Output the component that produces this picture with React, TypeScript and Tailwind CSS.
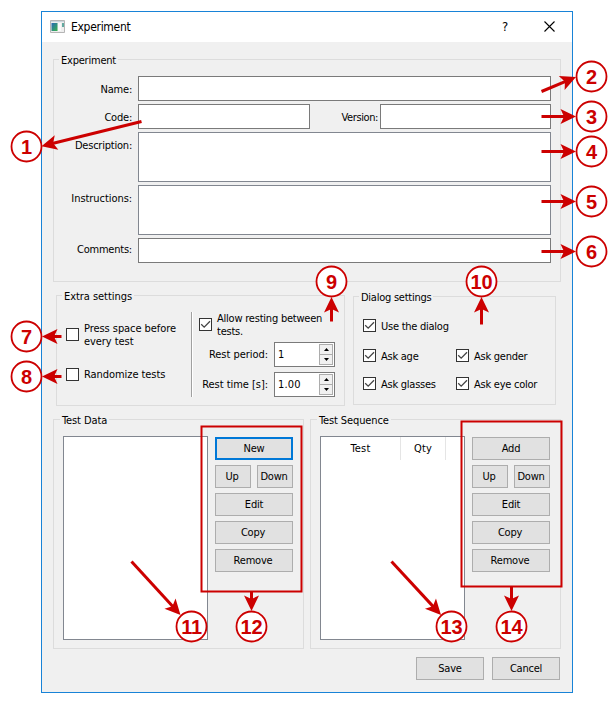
import React from "react";

type Box = { className?: string; children?: React.ReactNode };

function Group({ title, className = "", titleClass = "", children }: Box & { title: string; titleClass?: string }) {
  return (
    <section className={`flex flex-col border border-[#dcdcdc] ${className}`}>
      <h2 className={`-mt-[7px] h-[14px] self-start whitespace-nowrap bg-[#f0f0f0] leading-[15px] ${titleClass}`}>{title}</h2>
      {children}
    </section>
  );
}

function Field({ className = "", children }: Box) {
  return <div className={`border border-[#7a7a7a] bg-white ${className}`}>{children}</div>;
}

function Row({ label, className = "", labelClass = "pt-[7px]", children }: Box & { label: string; labelClass?: string }) {
  return (
    <div className={`flex ${className}`}>
      <span className={`w-[78px] shrink-0 text-right leading-[14px] ${labelClass}`}>{label}</span>
      <span className="w-[6px] shrink-0" />
      {children}
    </div>
  );
}

function Check({ checked = false, className = "", textClass = "tracking-[-0.06px]", children }: Box & { checked?: boolean; textClass?: string }) {
  return (
    <div className={`flex items-center gap-[5px] ${className}`}>
      <span className="h-[13px] w-[13px] shrink-0 border border-[#333333] bg-white">
        {checked && (
          <svg viewBox="0 0 11 11" className="h-[11px] w-[11px]">
            <path d="M1.2 5.2 4.2 8.2 10 2.3" fill="none" stroke="#444" strokeWidth="1.3" />
          </svg>
        )}
      </span>
      <span className={`whitespace-nowrap leading-[13px] ${textClass}`}>{children}</span>
    </div>
  );
}

function Spin({ label, value, className = "" }: { label: string; value: string; className?: string }) {
  return (
    <div className={`flex h-[25px] items-center ${className}`}>
      <span className="w-[76px] whitespace-nowrap pt-px text-right tracking-[-0.04px]">{label}</span>
      <div className="ml-[6px] flex h-[25px] w-[61px] items-center justify-between border border-[#7a7a7a] bg-white pl-[3px] pr-px">
        <span className="pt-px tracking-[0.2px]">{value}</span>
        <div className="flex h-[21px] w-[14px] flex-col">
          <span className="flex h-[11px] items-center justify-center border border-[#acacac] bg-[#f0f0f0]">
            <svg viewBox="0 0 5 3" className="h-[3px] w-[5px]"><path d="M0 3 2.5 0 5 3z" /></svg>
          </span>
          <span className="-mt-px flex h-[11px] items-center justify-center border border-[#acacac] bg-[#f0f0f0]">
            <svg viewBox="0 0 5 3" className="h-[3px] w-[5px]"><path d="M0 0 2.5 3 5 0z" /></svg>
          </span>
        </div>
      </div>
    </div>
  );
}

function Button({ className = "", focused = false, children }: Box & { focused?: boolean }) {
  return (
    <button className={`flex h-[23px] items-center justify-center bg-[#e1e1e1] pt-px ${focused ? "border-2 border-[#0078d7]" : "border border-[#adadad]"} ${className}`}>
      {children}
    </button>
  );
}

function Buttons({ first, focused = false }: { first: string; focused?: boolean }) {
  return (
    <div className="mt-px flex w-[78px] flex-col gap-[5px]">
      <Button focused={focused}>{first}</Button>
      <div className="flex justify-between">
        <Button className="w-[36px] pr-[2px]">Up</Button>
        <Button className="w-[36px] pr-[2px]">Down</Button>
      </div>
      <Button>Edit</Button>
      <Button className="pr-[2px]">Copy</Button>
      <Button className="pr-[2px]">Remove</Button>
    </div>
  );
}

const markers: [number, number, number][] = [
  [1, 26.5, 146.5], [2, 591.5, 76.5], [3, 591.5, 116.5], [4, 591.5, 151.5], [5, 591.5, 201.5],
  [6, 591.5, 251.5], [7, 26.5, 336.5], [8, 26.5, 376.5], [9, 331.5, 281.5], [10, 481.5, 281.5],
  [11, 191.5, 626.5], [12, 251.5, 626.5], [13, 451.5, 626.5], [14, 511.5, 626.5],
];

// Each arrow runs from its tail to its tip.
const arrows: [number, number, number, number][] = [
  [141.5, 121.5, 41.5, 146.2], [541.5, 91.5, 576, 77], [541.5, 116.5, 576, 116.5], [541.5, 151.5, 576, 151.5],
  [541.5, 201.5, 576, 201.5], [541.5, 251.5, 576, 251.5], [61.5, 336.5, 42, 336.5], [61.5, 376.5, 42, 376.5],
  [331.5, 321.5, 331.5, 297], [481.5, 324.5, 481.5, 297], [131.5, 561.5, 180.5, 615], [251.5, 591.5, 251.5, 611],
  [391.5, 561.5, 441, 615], [511.5, 586.5, 511.5, 611],
];

function Annotations() {
  return (
    <svg className="pointer-events-none absolute left-0 top-0 h-[702px] w-[612px]" viewBox="0 0 612 702">
      <g fill="none" stroke="#cc0000" strokeWidth="2">
        <rect x="201.5" y="426.5" width="100" height="165" />
        <rect x="461.5" y="421.5" width="100" height="165" />
      </g>
      {arrows.map(([x1, y1, x2, y2], i) => {
        const length = Math.hypot(x2 - x1, y2 - y1);
        const angle = (Math.atan2(y2 - y1, x2 - x1) * 180) / Math.PI;
        return (
          <g key={i} transform={`translate(${x2} ${y2}) rotate(${angle})`} fill="#cc0000">
            <rect x={-length} y="-1.5" width={length - 8} height="3" />
            <path d="M0 0-15.5-7.5-12 0-15.5 7.5z" />
          </g>
        );
      })}
      {markers.map(([n, x, y]) => (
        <g key={n}>
          <circle cx={x} cy={y} r="15" fill="#fff" stroke="#cc0000" strokeWidth="1.8" />
          <text x={x} y={y + 7} textAnchor="middle" fill="#cc0000" className="font-['Liberation_Sans',sans-serif] text-[20px] font-bold">{n}</text>
        </g>
      ))}
    </svg>
  );
}

export default function App() {
  return (
    <div className="relative h-[702px] w-[612px] overflow-hidden bg-white pl-[41px] pt-[11px] font-['DejaVu_Sans_Condensed','DejaVu_Sans',sans-serif] text-[11px] tracking-[-0.22px] text-black">
      <main className="flex h-[682px] w-[532px] flex-col border border-[#1883d7] bg-[#f0f0f0]">
        <header className="flex h-[30px] items-center bg-white pl-[8px]">
          <svg viewBox="0 0 15 13" className="-mt-[2px] h-[13px] w-[15px]">
            <defs>
              <linearGradient id="pane" x2="1" y2="1"><stop stopColor="#2868b8" /><stop offset="1" stopColor="#39b54a" /></linearGradient>
            </defs>
            <path d="M.5.5h14v12H.5z" fill="#eee" stroke="#b5b5b5" />
            <path d="M1 1h13v1H1z" fill="#c9d5dd" />
            <path d="M1.5 3h6v8h-6z" fill="url(#pane)" />
            <path d="M8 3h3v8H8z" fill="#fafafa" />
            <path d="M12 3h2v4h-2z" fill="#62a9a0" />
          </svg>
          <h1 className="ml-[6px] text-[12px] leading-[16px] tracking-[-0.3px]">Experiment</h1>
          <span className="ml-auto mr-[36px] text-[13px] -mt-px">?</span>
          <svg viewBox="0 0 11 11" className="-mt-px mr-[17px] h-[11px] w-[11px]"><path d="m.5.5 10 10m0-10-10 10" stroke="#000" strokeWidth="1.1" /></svg>
        </header>

        <Group title="Experiment" className="ml-[11px] mt-[17px] h-[223px] w-[508px]" titleClass="ml-[5px] px-[2px]">
          <div className="mt-[9px] flex flex-col gap-[3px]">
            <Row label="Name:"><Field className="h-[25px] w-[413px]" /></Row>
            <Row label="Code:">
              <Field className="h-[25px] w-[172px]" />
              <span className="w-[70px] pr-[2px] pt-[7px] text-right leading-[14px] tracking-[-0.4px]">Version:</span>
              <Field className="h-[25px] w-[171px]" />
            </Row>
            <Row label="Description:"><Field className="h-[50px] w-[413px] border-[#828790]" /></Row>
            <Row label="Instructions:" labelClass="pt-[7px] tracking-[-0.06px]"><Field className="h-[50px] w-[413px] border-[#828790]" /></Row>
            <Row label="Comments:" labelClass="pt-[5px]"><Field className="h-[25px] w-[413px]" /></Row>
          </div>
        </Group>

        <div className="ml-[14px] mt-[13px] flex items-start">
          <Group title="Extra settings" className="h-[111px] w-[289px]" titleClass="ml-[5px] px-[2px] tracking-[-0.05px]">
            <div className="flex">
              <div className="ml-[9px] mt-[18px] w-[125px]">
                <Check className="h-[27px]">Press space before<br />every test</Check>
                <Check className="mt-[13px] h-[27px]">Randomize tests</Check>
              </div>
              <div className="mt-[9px] h-[85px] w-[2px] border-l border-r border-l-[#a0a0a0] border-r-white" />
              <div className="ml-[6px] mt-[8px]">
                <Check checked className="h-[27px]" textClass="mt-px tracking-[-0.22px]">Allow resting between<br />tests.</Check>
                <Spin label="Rest period:" value="1" className="-ml-[7px] mt-[4px]" />
                <Spin label="Rest time [s]:" value="1.00" className="-ml-[7px] mt-[5px]" />
              </div>
            </div>
          </Group>
          <Group title="Dialog settings" className="ml-[8px] mt-px h-[109px] w-[203px]" titleClass="ml-[5px] px-[2px] tracking-[-0.25px]">
            <div className="ml-[9px] mt-[15px]">
              <Check checked className="h-[13px]" textClass="mt-px tracking-[-0.25px]">Use the dialog</Check>
              <div className="mt-[17px] grid grid-cols-[93px_auto] gap-y-[15px]">
                <Check checked className="h-[13px]" textClass="mt-px tracking-[-0.25px]">Ask age</Check>
                <Check checked className="h-[13px]" textClass="mt-px tracking-[-0.25px]">Ask gender</Check>
                <Check checked className="h-[13px]" textClass="mt-px tracking-[-0.25px]">Ask glasses</Check>
                <Check checked className="h-[13px]" textClass="mt-px tracking-[-0.25px]">Ask eye color</Check>
              </div>
            </div>
          </Group>
        </div>

        <div className="ml-[11px] mt-[13px] flex gap-[6px]">
          <Group title="Test Data" className="h-[230px] w-[251px]" titleClass="ml-[6px] px-[2px] tracking-[-0.1px]">
            <div className="ml-[9px] mt-[9px] flex gap-[7px]">
              <div className="h-[204px] w-[145px] border border-[#828790] bg-white" />
              <Buttons first="New" focused />
            </div>
          </Group>
          <Group title="Test Sequence" className="h-[230px] w-[251px]" titleClass="ml-[6px] px-[2px] tracking-[-0.12px]">
            <div className="ml-[9px] mt-[9px] flex gap-[7px]">
              <div className="h-[204px] w-[145px] border border-[#828790] bg-white">
                <div className="flex h-[23px] text-center leading-[24px] tracking-[0.2px]">
                  <span className="w-[80px] border-r border-[#e5e5e5]">Test</span>
                  <span className="w-[45px] border-r border-[#e5e5e5]">Qty</span>
                </div>
              </div>
              <Buttons first="Add" />
            </div>
          </Group>
        </div>

        <footer className="mr-[12px] mt-[8px] flex justify-end gap-[8px]">
          <Button className="w-[68px]">Save</Button>
          <Button className="w-[68px]">Cancel</Button>
        </footer>
      </main>
      <Annotations />
    </div>
  );
}
